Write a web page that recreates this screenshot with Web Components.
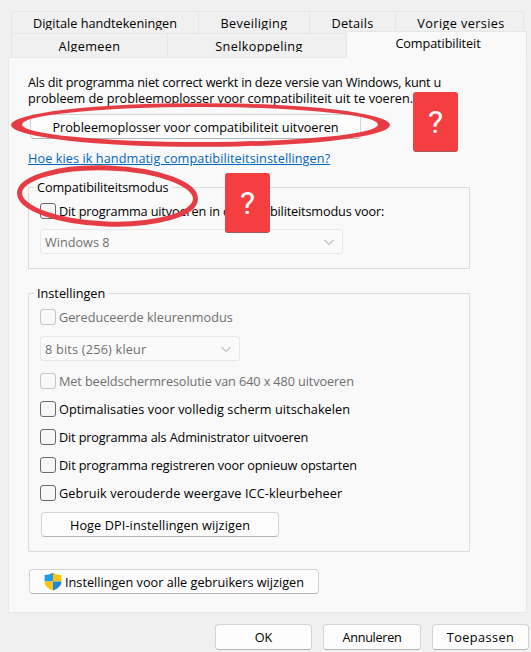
<!DOCTYPE html>
<html lang="nl"><head><meta charset="utf-8"><title>Compatibiliteit</title>
<style>
html,body{margin:0;height:652px;overflow:hidden;background:#f0f0f0}
body{font:12.7px/16px "Open Sans","Noto Sans",sans-serif;color:#000}
</style></head><body>
<x-dialog>
  <x-tab-row slot="tabs" style="height:22px;margin-top:11px">
    <x-tab w="188">Digitale handtekeningen</x-tab><x-tab w="111" style="letter-spacing:.35px">Beveiliging</x-tab><x-tab w="86" style="letter-spacing:.25px">Details</x-tab><x-tab w="128" style="letter-spacing:.38px;padding-left:3px">Vorige versies</x-tab>
  </x-tab-row>
  <x-tab-row slot="tabs" style="height:24px;--tp:4px;--th:14px">
    <x-tab w="157" style="letter-spacing:.35px">Algemeen</x-tab><x-tab w="179" style="letter-spacing:.33px;padding-left:4px">Snelkoppeling</x-tab><x-tab w="180" active style="letter-spacing:-.1px;--tp:3px;--th:16px;padding-left:3px">Compatibiliteit</x-tab>
  </x-tab-row>
  <x-panel slot="panel">
    <p-text><span style="letter-spacing:-.2px">Als dit programma niet correct werkt in deze versie van Windows, kunt u</span><br><span style="letter-spacing:-.03px">probleem de probleemoplosser voor compatibiliteit uit te voeren.</span></p-text>
    <x-btn w="331" h="25" style="margin:8px 0 0 2px">Probleemoplosser voor compatibiliteit uitvoeren</x-btn>
    <x-link style="margin-top:11px;letter-spacing:.08px">Hoe kies ik handmatig compatibiliteitsinstellingen?</x-link>
    <x-group label="Compatibiliteitsmodus" style="margin-top:21px;--gap:10px;--ls:-.1px">
      <x-check style="letter-spacing:-.15px">Dit programma uitvoeren in compatibiliteitsmodus voor:</x-check>
      <x-combo w="303">Windows 8</x-combo>
    </x-group>
    <x-group label="Instellingen" style="margin-top:24px;--gap:12px">
      <x-check disabled>Gereduceerde kleurenmodus</x-check>
      <x-combo w="200" style="margin-top:-1px;letter-spacing:.2px">8 bits (256) kleur</x-combo>
      <x-check disabled style="letter-spacing:-.1px">Met beeldschermresolutie van 640 x 480 uitvoeren</x-check>
      <x-check style="letter-spacing:.06px">Optimalisaties voor volledig scherm uitschakelen</x-check>
      <x-check style="letter-spacing:-.15px">Dit programma als Administrator uitvoeren</x-check>
      <x-check style="letter-spacing:-.14px">Dit programma registreren voor opnieuw opstarten</x-check>
      <x-check style="letter-spacing:.12px">Gebruik verouderde weergave ICC-kleurbeheer</x-check>
      <x-btn w="238" h="25" style="margin:-1px 0 0 1px;letter-spacing:.1px">Hoge DPI-instellingen wijzigen</x-btn>
    </x-group>
    <x-btn w="290" h="25" style="margin:17px 0 0 1px"><x-shield></x-shield>Instellingen voor alle gebruikers wijzigen</x-btn>
  </x-panel>
  <x-btn slot="actions" w="97" h="26">OK</x-btn>
  <x-btn slot="actions" w="98" h="26" style="letter-spacing:-.3px">Annuleren</x-btn>
  <x-btn slot="actions" w="97" h="26" style="letter-spacing:.45px">Toepassen</x-btn>
  <x-note slot="over" style="left:413px;top:92px"></x-note>
  <x-note slot="over" style="left:225px;top:173px"></x-note>
  <x-marks slot="over"></x-marks>
</x-dialog>
<script>
function def(name, css, html, init){
  customElements.define(name, class extends HTMLElement{
    constructor(){super();this.attachShadow({mode:'open'}).innerHTML='<style>'+css+'</style>'+html;}
    connectedCallback(){ if(init) init(this); }
  });
}
def('x-dialog',
 ':host{display:block;position:relative;width:531px;height:652px;overflow:hidden}.tabs{margin-left:11px;display:flex;flex-direction:column;position:relative}.panel{margin-left:8px;width:519px;position:relative}.act{display:flex;gap:11px;margin:11px 0 0 215px}',
 '<div class="tabs"><slot name="tabs"></slot></div><div class="panel"><slot name="panel"></slot></div><div class="act"><slot name="actions"></slot></div><slot name="over"></slot>');
def('x-tab-row',':host{display:flex;align-items:flex-end}','<slot></slot>');
def('x-tab',
 ':host{display:block;box-sizing:border-box;height:100%;border:1px solid #e6e6e6;border-bottom:0;border-left-width:0;background:#f0f0f0;text-align:center;padding-top:var(--tp,3px);white-space:nowrap}:host(:first-child){border-left-width:1px}:host([active]){height:27px;background:#f9f9f9;border-left-width:0;position:relative;z-index:2;margin-bottom:-1px}.t{height:var(--th,15px);overflow:hidden}',
 '<div class="t"><slot></slot></div>',el=>{el.style.width=el.getAttribute('w')+'px'});
def('x-panel',':host{display:block;box-sizing:border-box;height:556px;background:#f9f9f9;border:1px solid #e8e8e8;padding:16px 19px 0}','<slot></slot>');
def('p-text',':host{display:block;white-space:nowrap}','<slot></slot>');
def('x-btn',
 ':host{display:flex;align-items:center;justify-content:center;box-sizing:border-box;background:#fdfdfd;border:1px solid #d4d4d4;border-bottom-color:#b4b4b4;border-radius:4px;white-space:nowrap}',
 '<slot></slot>',el=>{el.style.width=el.getAttribute('w')+'px';el.style.height=el.getAttribute('h')+'px'});
def('x-link',':host{display:block;color:#0067c0;text-decoration:underline;white-space:nowrap}','<slot></slot>');
def('x-group',
 ':host{display:block;box-sizing:border-box;width:442px;border:1px solid #dcdcdc;padding:0 11px 14px}.l{display:block;width:fit-content;margin:-9px 0 8px -6px;padding:0 3px;background:#f9f9f9;height:16px;letter-spacing:var(--ls,0)}.b{display:flex;flex-direction:column;gap:var(--gap,12px);align-items:flex-start}',
 '<span class="l"></span><div class="b"><slot></slot></div>',el=>{el.shadowRoot.querySelector('.l').textContent=el.getAttribute('label')});
def('x-check',
 ':host{display:flex;align-items:center;gap:3px;height:16px;white-space:nowrap}.c{box-sizing:border-box;width:16px;height:16px;border:1px solid #6a6a6a;border-radius:3px;background:#f6f6f6;flex:none}:host([disabled]){color:#6f6f6f}:host([disabled]) .c{border-color:#c4c4c4;background:#f9f9f9}',
 '<span class="c"></span><span><slot></slot></span>');
def('x-combo',
 ':host{display:flex;align-items:center;justify-content:space-between;box-sizing:border-box;height:25px;border:1px solid #e8e8e8;border-radius:3px;background:#fbfbfb;color:#6f6f6f;padding:0 4px 0 4px;white-space:nowrap}svg{width:12px;height:8px;margin-right:3px}',
 '<slot></slot><svg viewBox="0 0 12 8"><path d="M1.5 2 6 6.5 10.5 2" fill="none" stroke="#9a9a9a"/></svg>',el=>{el.style.width=el.getAttribute('w')+'px'});
def('x-shield',':host{display:block;width:18px;height:19px;margin-right:3px;flex:none}svg{display:block}',
 '<svg width="18" height="19" viewBox="0 0 18 19"><defs><clipPath id="s"><path d="M9 .5C7.200 2 4.500 3 .6 3.100V9.500c0 4.300 3.400 7.400 8.400 9 5-1.600 8.400-4.700 8.400-9V3.100C13.500 3 10.800 2 9 .5Z"/></clipPath></defs><g clip-path="url(#s)"><rect width="9" height="9.500" fill="#1f9be8"/><rect width="9" height="9.500" x="9" fill="#fcc40c"/><rect width="9" height="9.500" y="9.500" fill="#fcc40c"/><rect width="9" height="9.500" x="9" y="9.500" fill="#1f87d8"/></g></svg>');
def('x-note',
 ':host{position:absolute;box-sizing:border-box;width:45px;height:60px;background:#f43e40;border-radius:3px;border-bottom:1px solid #a8585a;color:#fff;display:flex;align-items:center;justify-content:center;font:400 32px/1 "Roboto",sans-serif}',
 '?');
def('x-marks',
 ':host{position:absolute;left:0;top:0;width:531px;height:652px;pointer-events:none}svg{position:absolute;left:0;top:0}',
 '<svg width="531" height="652"><path fill="#e63c44" fill-rule="evenodd" d="M11 125A189.500 21.800 0 1 0 390 125A189.500 21.800 0 1 0 11 125ZM22 124.500A178 17.500 0 1 0 378 124.500A178 17.500 0 1 0 22 124.500Z"/><ellipse cx="107.500" cy="196" rx="88" ry="28" fill="none" stroke="#e63c44" stroke-width="5" transform="rotate(2 107.500 196)"/></svg>');
</script>
</body></html>
